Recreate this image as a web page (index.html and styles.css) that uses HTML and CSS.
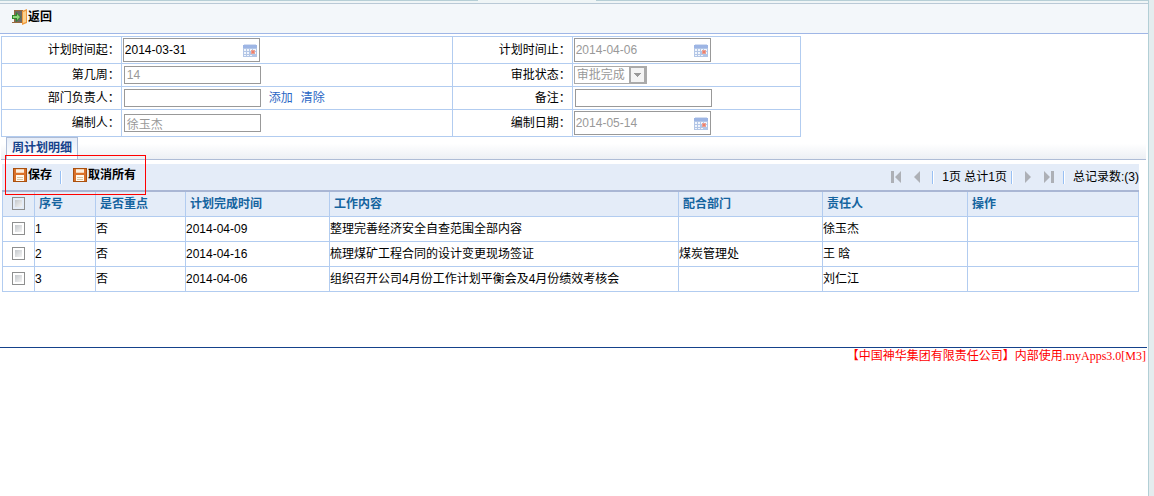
FILE: index.html
```
<!DOCTYPE html>
<html lang="zh-CN">
<head>
    <meta charset="UTF-8">
    <meta name="viewport" content="width=device-width, initial-scale=1.0">
    <title>周计划明细</title>
    <link rel="stylesheet" href="styles.css">
</head>
<body>
    <!-- Shared icons -->
    <svg class="sprite" aria-hidden="true">
        <symbol id="icon-calendar" viewBox="0 0 14 13">
            <rect x="0" y="1" width="14" height="12" fill="#b3c6e6"/>
            <rect x="0" y="1" width="14" height="3" fill="#9db5e4"/>
            <rect x="1" y="0" width="12" height="1" fill="#d5dff2"/>
            <path d="M1 5h2v2H1zM4 5h2v2H4zM7 5h2v2H7zM10 5h3v2h-3zM1 8h2v2H1zM4 8h2v2H4zM10 8h3v2h-3zM1 11h2v1H1zM4 11h2v1H4zM7 11h2v1H7z" fill="#f1f5fc"/>
            <rect x="8" y="6" width="4" height="4" fill="#e9a194"/>
            <rect x="9" y="7" width="2" height="2" fill="#ee7f6c"/>
        </symbol>
        <symbol id="icon-save" viewBox="0 0 14 14">
            <rect x="0" y="0" width="14" height="14" fill="#a9500f"/>
            <rect x="1" y="1" width="12" height="12" fill="#d9712a"/>
            <rect x="3" y="1" width="8" height="4" fill="#f6d3b0"/>
            <rect x="3" y="2" width="8" height="2" fill="#fdf0e0"/>
            <rect x="3" y="7" width="8" height="6" fill="#fffaf0"/>
            <path d="M4 9.500h6M4 11.500h6" stroke="#d8c4a0"/>
        </symbol>
    </svg>

    <main class="page">
        <header class="top-bar">
            <button type="button" class="tool-button">
                <svg class="icon-exit" viewBox="0 0 16 16" aria-hidden="true">
                    <path d="M2 1h9v13H0v-1h2z" fill="#9a6a3c"/>
                    <rect x="3" y="2" width="7" height="11" fill="#6d6a64"/>
                    <path d="M10 2l5-2v14l-5 2z" fill="#ee9a3e"/>
                    <path d="M11 3l3-1v11l-3 1z" fill="#fbd18e"/>
                    <path d="M0 6h4V3l5 5-5 5v-3H0z" fill="#2f8a2c"/>
                    <path d="M1 7h4V5l3 3-3 3V9H1z" fill="#8fd67c"/>
                </svg>返回
            </button>
        </header>

        <form>
            <table class="form-table">
                <tr class="row-tall">
                    <th><label for="start">计划时间起：</label></th>
                    <td><span class="date-box"><input type="text" id="start" value="2014-03-31"><svg class="icon-calendar" aria-hidden="true"><use href="#icon-calendar"/></svg></span></td>
                    <th><label for="end">计划时间止：</label></th>
                    <td><span class="date-box"><input type="text" id="end" value="2014-04-06" disabled><svg class="icon-calendar" aria-hidden="true"><use href="#icon-calendar"/></svg></span></td>
                </tr>
                <tr class="row-short">
                    <th><label for="week">第几周：</label></th>
                    <td><input type="text" class="text-box" id="week" value="14" disabled></td>
                    <th><label for="status">审批状态：</label></th>
                    <td><select class="status-select" id="status" disabled><option>审批完成</option></select></td>
                </tr>
                <tr class="row-short">
                    <th><label for="leader">部门负责人：</label></th>
                    <td><input type="text" class="text-box" id="leader"><a href="#">添加</a><a href="#">清除</a></td>
                    <th><label for="remark">备注：</label></th>
                    <td><input type="text" class="text-box" id="remark"></td>
                </tr>
                <tr class="row-tall">
                    <th><label for="author">编制人：</label></th>
                    <td><input type="text" class="text-box" id="author" value="徐玉杰" disabled></td>
                    <th><label for="created">编制日期：</label></th>
                    <td><span class="date-box"><input type="text" id="created" value="2014-05-14" disabled><svg class="icon-calendar" aria-hidden="true"><use href="#icon-calendar"/></svg></span></td>
                </tr>
            </table>
        </form>

        <nav class="tabs">
            <a href="#" class="tab">周计划明细</a>
        </nav>

        <section class="grid">
            <div class="toolbar">
                <button type="button" class="tool-button"><svg class="icon-save" aria-hidden="true"><use href="#icon-save"/></svg>保存</button>
                <span class="separator"></span>
                <button type="button" class="tool-button"><svg class="icon-save" aria-hidden="true"><use href="#icon-save"/></svg>取消所有</button>
                <span class="highlight"></span>
                <div class="pager">
                    <button type="button" class="page-button" aria-label="首页"><svg viewBox="0 0 11 12" aria-hidden="true"><path d="M0 0h3v12H0zM10 0v12L4 6z"/></svg></button>
                    <button type="button" class="page-button" aria-label="上一页"><svg viewBox="0 0 11 12" aria-hidden="true"><path d="M8 0v12L2 6z"/></svg></button>
                    <span class="separator"></span>
                    <span class="page-count">1页 总计1页</span>
                    <span class="separator"></span>
                    <button type="button" class="page-button" aria-label="下一页"><svg viewBox="0 0 11 12" aria-hidden="true"><path d="M3 0v12l6-6z"/></svg></button>
                    <button type="button" class="page-button" aria-label="末页"><svg viewBox="0 0 11 12" aria-hidden="true"><path d="M1 0v12l6-6zM8 0h3v12H8z"/></svg></button>
                    <span class="separator"></span>
                    <span class="total">总记录数:(3)</span>
                </div>
            </div>

            <table class="data-table">
                <colgroup>
                    <col class="col-check">
                    <col class="col-index">
                    <col class="col-key">
                    <col class="col-wide">
                    <col>
                    <col class="col-wide">
                    <col class="col-person">
                    <col class="col-action">
                </colgroup>
                <thead>
                    <tr>
                        <th><input type="checkbox" aria-label="全选"></th>
                        <th>序号</th>
                        <th>是否重点</th>
                        <th>计划完成时间</th>
                        <th>工作内容</th>
                        <th>配合部门</th>
                        <th>责任人</th>
                        <th>操作</th>
                    </tr>
                </thead>
                <tbody>
                    <tr>
                        <td><input type="checkbox" aria-label="选择1"></td>
                        <td>1</td>
                        <td>否</td>
                        <td>2014-04-09</td>
                        <td>整理完善经济安全自查范围全部内容</td>
                        <td></td>
                        <td>徐玉杰</td>
                        <td></td>
                    </tr>
                    <tr>
                        <td><input type="checkbox" aria-label="选择2"></td>
                        <td>2</td>
                        <td>否</td>
                        <td>2014-04-16</td>
                        <td>梳理煤矿工程合同的设计变更现场签证</td>
                        <td>煤炭管理处</td>
                        <td>王 晗</td>
                        <td></td>
                    </tr>
                    <tr>
                        <td><input type="checkbox" aria-label="选择3"></td>
                        <td>3</td>
                        <td>否</td>
                        <td>2014-04-06</td>
                        <td>组织召开公司4月份工作计划平衡会及4月份绩效考核会</td>
                        <td></td>
                        <td>刘仁江</td>
                        <td></td>
                    </tr>
                </tbody>
            </table>
        </section>

        <footer class="footer">【中国神华集团有限责任公司】内部使用.myApps3.0[M3]</footer>
    </main>
</body>
</html>
```
FILE: styles.css
```
/* Base styles */
* {
    margin: 0;
    padding: 0;
    box-sizing: border-box;
}

body {
    min-height: 100vh;
    padding-right: 5px;
    background-color: #e4ecee;
    font-family: "Liberation Sans", "Noto Sans CJK SC", sans-serif;
    font-size: 12px;
    line-height: 16px;
    color: #000;
}

input,
select,
button {
    font: inherit;
}

button {
    border: 0;
    background: none;
}

a {
    color: #2a66c4;
    text-decoration: none;
}

.sprite {
    display: none;
}

.page {
    min-height: 100vh;
    border-right: 1px solid #b2cfd6;
    background-color: #fff;
}

/* Top bar */
.top-bar {
    display: flex;
    align-items: center;
    height: 34px;
    padding: 0 12px;
    border-bottom: 1px solid #9fb6e6;
    background:
        linear-gradient(#eff5f6, #eff5f6) 478px 0 / 118px 1px no-repeat,
        linear-gradient(#b6cfd6 1px, #eff5f6 1px 3px, #b9c9d6 3px 4px, #f3f7fa 4px);
}

.tool-button {
    display: flex;
    align-items: center;
    font-weight: bold;
    white-space: nowrap;
}

.icon-exit {
    width: 16px;
    height: 16px;
}

.icon-save {
    width: 14px;
    height: 14px;
    margin-right: 1px;
}

/* Form */
.form-table {
    width: 800px;
    max-width: 100%;
    margin: 2px 0 0 1px;
    border-collapse: collapse;
    table-layout: fixed;
}

.form-table th,
.form-table td {
    border: 1px solid #b2ccf0;
}

.form-table th {
    width: 15%;
    padding-right: 1px;
    font-weight: normal;
    text-align: right;
}

.form-table td {
    padding-left: 1px;
}

.form-table td:nth-child(2) {
    width: 331px;
}

.row-tall {
    height: 27px;
}

.row-short {
    height: 23px;
}

.date-box {
    display: flex;
    align-items: center;
    width: 137px;
    height: 24px;
    padding: 0 2px 0 1px;
    border: 1px solid #999;
}

.date-box input {
    flex: 1;
    min-width: 0;
    border: 0;
    background: none;
}

.icon-calendar {
    width: 14px;
    height: 13px;
}

.text-box {
    display: inline-block;
    width: 137px;
    height: 18px;
    margin-left: 1px;
    padding: 0 2px;
    border: 1px solid #999;
    background-color: #fff;
    vertical-align: middle;
}

input:disabled {
    color: #999;
}

.form-table a {
    margin-left: 8px;
    vertical-align: middle;
}

.status-select {
    display: block;
    width: 73px;
    height: 18px;
    padding-left: 2px;
    border: 1px solid #aaa;
    border-radius: 0;
    appearance: none;
    background:
        conic-gradient(from 315deg at 50% 100%, #999 90deg, transparent 0) right 5px top 6px / 7px 4px no-repeat,
        linear-gradient(#f4f4f4, #f4f4f4) right 2px top 1px / 13px 14px no-repeat,
        linear-gradient(#aaa, #aaa) right / 17px 100% no-repeat;
    color: #999;
    opacity: 1;
    line-height: 16px;
}

/* Tabs */
.tabs {
    display: flex;
    height: 23px;
    margin: 0 2px 4px 1px;
    padding-left: 5px;
    border-bottom: 1px solid #aebcd6;
    background: linear-gradient(#fff 30%, #eceff4);
}

.tab {
    padding: 2px 5px;
    border: 1px solid #aebcd6;
    border-bottom: 0;
    background: linear-gradient(#e6edf8, #fff);
    color: #15428b;
    font-weight: bold;
}

/* Grid */
.grid {
    margin: 0 9px 0 2px;
}

.toolbar {
    position: relative;
    display: flex;
    align-items: center;
    height: 28px;
    padding-left: 11px;
    border-bottom: 2px solid #a9b6d4;
    background-color: #e4ecf8;
}

.toolbar .tool-button {
    margin-bottom: 4px;
}

.separator {
    width: 2px;
    height: 13px;
    margin: 0 4px;
    border-left: 1px solid #98c0f4;
    background-color: #fff;
}

.toolbar .tool-button + .separator {
    margin: 0 11px 0 8px;
}

/* Red frame around the action buttons */
.highlight {
    position: absolute;
    top: -9px;
    left: 3px;
    width: 141px;
    height: 40px;
    border: 1px solid #f00;
    pointer-events: none;
}

.pager {
    display: flex;
    align-items: center;
    margin-left: auto;
    white-space: nowrap;
}

.page-count,
.total {
    padding-left: 4px;
}

.page-button {
    width: 11px;
    margin: 0 5px;
}

.page-button svg {
    display: block;
    width: 11px;
    height: 12px;
    fill: #adb0b6;
}

.data-table {
    width: 100%;
    border-collapse: collapse;
    table-layout: fixed;
}

.data-table th,
.data-table td {
    height: 25px;
    border: 1px solid #b2ccf0;
    text-align: left;
    white-space: nowrap;
}

.data-table th {
    height: 24px;
    padding-left: 4px;
    border-top: 0;
    background-color: #e4ecf8;
    color: #15649f;
}

.data-table th:first-child,
.data-table td:first-child {
    padding: 0;
    text-align: center;
}

.col-check {
    width: 32px;
}

.col-index {
    width: 61px;
}

.col-key {
    width: 90px;
}

.col-wide {
    width: 144px;
}

.col-person {
    width: 145px;
}

.col-action {
    width: 171px;
}

.data-table input {
    display: block;
    width: 13px;
    height: 13px;
    margin: 0 auto;
    padding: 2px;
    border: 1px solid #8e8f8f;
    appearance: none;
    background: linear-gradient(135deg, #c4c8cc, #f4f4f4) content-box #f4f4f4;
}

/* Footer */
.footer {
    margin: 55px 1px 0 0;
    padding-right: 1px;
    border-top: 1px solid #15428b;
    color: #f00;
    font-family: "Liberation Serif", "Noto Sans CJK SC", serif;
    text-align: right;
}
```
